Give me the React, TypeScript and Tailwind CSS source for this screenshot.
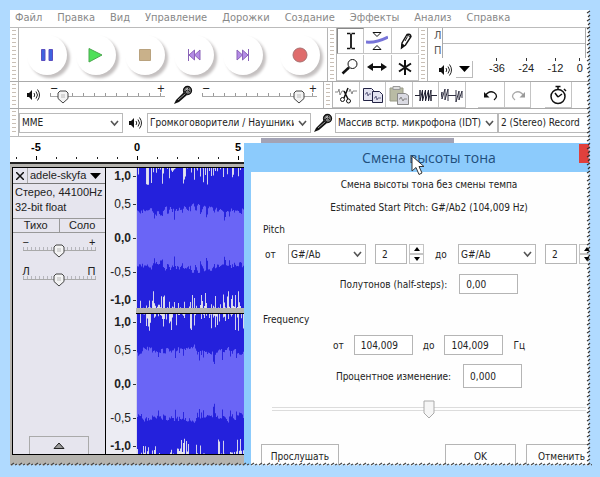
import { ReactNode, useState } from "react";
import clsx from "clsx";

const menu = [
	"Файл",
	"Правка",
	"Вид",
	"Управление",
	"Дорожки",
	"Создание",
	"Эффекты",
	"Анализ",
	"Справка",
];

const scale = [
	{ label: "1,0", className: "h-4 font-bold" },
	{ label: "0,5", className: "h-10" },
	{ label: "0,0", className: "h-7 font-bold" },
	{ label: "-0,5", className: "h-10" },
	{ label: "-1,0", className: "h-4 font-bold" },
];

const COLUMNS = 460;

const createRandom = (seed: number) => () => {
	seed = (seed * 16807) % 2147483647;
	return seed / 2147483647;
};

const buildWave = (seed: number, base: number) => {
	const random = createRandom(seed);
	let peak = "";
	let rms = "";
	let drift = 0;

	for (let x = 1; x < COLUMNS; x++) {
		const top = random() > 0.45 ? random() ** 2 * 17 : 0;
		const bottom = random() > 0.45 ? random() ** 2 * 17 : 0;
		drift = drift * 0.8 + (random() - 0.5) * 5;
		const level = base + drift + random() * 4 - (random() > 0.85 ? 6 : 0);
		const low = level + random() * 3 - 1;
		peak += `M${x + 0.5} ${top.toFixed(1)}V${(140 - bottom).toFixed(1)}`;
		rms += `M${x + 0.5} ${(70 - level).toFixed(1)}V${(70 + low).toFixed(1)}`;
	}
	return { peak, rms };
};

const channels = [buildWave(4177, 26), buildWave(9241, 31)];

const Wave = ({ peak, rms }: { peak: string; rms: string }) => (
	<svg className="block h-[140px] w-full bg-[#e4e3ee]">
		<path d={peak} stroke="#2421dc" strokeWidth="1.1" />
		<path d={rms} stroke="#6a65f6" strokeWidth="1.1" />
	</svg>
);

const Grip = () => (
	<div className="flex w-[9px] shrink-0 justify-center self-stretch border-r border-[#b5b5b5] py-[2px]">
		<div className="w-[4px] bg-[repeating-linear-gradient(to_bottom,#c9bfb5_0_1px,transparent_1px_4px)]" />
	</div>
);

const SpeakerIcon = () => (
	<svg width="14" height="14" viewBox="0 0 14 14" fill="none" className="shrink-0">
		<path d="M1 5h2l3-3v10l-3-3H1z" fill="#111" />
		<path d="M8 5q1.5 2 0 4M10 3.500q3 3.500 0 7M11.500 1.500q4 5.500 0 11" stroke="#222" />
	</svg>
);

const MicIcon = () => (
	<svg width="20" height="20" viewBox="0 0 20 20" className="shrink-0">
		<path d="M1 19 3 15 11 7l3 3-8 7z" fill="#111" />
		<path d="m5 15 7-6" stroke="#999" />
		<circle cx="14.500" cy="5.500" r="4" fill="#777" stroke="#111" strokeWidth="1.300" />
		<path d="m10 5 5 5M13 3l4 4M16 3l-4 4" stroke="#222" />
		<path d="M13 4h2" stroke="#fff" />
	</svg>
);

interface SliderProps {
	label: string;
	initial: number;
	marks: [string, string];
	className: string;
	dense?: boolean;
}

const Slider = ({ label, initial, marks, className, dense }: SliderProps) => {
	const [value, setValue] = useState(initial);

	return (
		<label className={clsx("relative block h-[22px] shrink-0", className)}>
			<span className="flex h-[9px] items-center justify-between text-[11px] leading-[9px] text-[#222]">
				<span>{marks[0]}</span>
				<span>{marks[1]}</span>
			</span>
			<span
				className={clsx(
					"block h-1 border-b border-[#a9a9a9]",
					dense
						? "bg-[repeating-linear-gradient(to_right,#b5b5bb_0_1px,transparent_1px_4px)]"
						: "bg-[repeating-linear-gradient(to_right,#9a9a9a_0_1px,transparent_1px_11px)]"
				)}
			/>
			<svg
				width="12"
				height="14"
				viewBox="0 0 12 14"
				className="absolute top-[6px] -translate-x-1/2"
				style={{ left: `${value}%` }}
			>
				<path d="M3 1h6l2 2v5.500L6 13 1 8.500V3z" fill="#f3f3f3" stroke="#444" />
				<path d="M4 5h4M4 7h4" stroke="#bbb" />
			</svg>
			<input
				type="range"
				aria-label={label}
				value={value}
				onChange={(e) => setValue(Number(e.target.value))}
				className="absolute inset-0 w-full opacity-0"
			/>
		</label>
	);
};

interface SelectProps {
	label: string;
	value: string;
	className: string;
}

const Select = ({ label, value, className }: SelectProps) => (
	<div className={clsx("relative h-5 shrink-0", className)}>
		<select
			aria-label={label}
			className="block h-full w-full appearance-none border border-[#b9b9b9] bg-white pr-4 pl-[2px] text-[10px] text-[#222]"
		>
			<option>{value}</option>
		</select>
		<svg
			width="9"
			height="7"
			viewBox="0 0 9 7"
			fill="none"
			className="pointer-events-none absolute top-[7px] right-1"
		>
			<path d="m1 1 3.500 4L8 1" stroke="#555" strokeWidth="1.600" />
		</svg>
	</div>
);

const RoundButton = ({ label, children }: { label: string; children: ReactNode }) => (
	<button
		type="button"
		aria-label={label}
		className="flex size-10 shrink-0 items-center justify-center rounded-full bg-white shadow-[3px_3px_3px_#c4c0c0]"
	>
		<svg width="16" height="16" viewBox="0 0 16 16">
			{children}
		</svg>
	</button>
);

interface ToolProps {
	label: string;
	children: ReactNode;
	className?: string;
}

const Tool = ({ label, children, className }: ToolProps) => (
	<button
		type="button"
		aria-label={label}
		className={clsx(
			"flex h-[26px] shrink-0 items-center justify-center border-r border-b border-[#c4c4c4]",
			className
		)}
	>
		<svg width="22" height="22" viewBox="0 0 22 22" fill="none" stroke="#111">
			{children}
		</svg>
	</button>
);

const Transport = () => (
	<div className="flex w-[318px] shrink-0 border-r border-[#b5b5b5]">
		<Grip />
		<div className="flex items-center gap-[9px] pl-2">
			<RoundButton label="Пауза">
				<path d="M2.500 2.500h3.500v11H2.500zM10 2.500h3.500v11H10z" fill="#3d63e0" stroke="#5a4fc0" />
			</RoundButton>
			<RoundButton label="Воспроизвести">
				<path d="m1 1.500 13 6.500-13 7z" fill="#4fe05a" stroke="#4aa84e" />
			</RoundButton>
			<RoundButton label="Остановить">
				<path d="M2.500 2.500h11v11h-11z" fill="#c9b18a" stroke="#b9a27e" />
			</RoundButton>
			<RoundButton label="К началу">
				<path d="M2.500 2v12M8.500 3v10L3 8zM14 3v10L8.500 8z" fill="#b48be6" stroke="#8a63b8" />
			</RoundButton>
			<RoundButton label="К концу">
				<path d="M13.500 2v12M7.500 3v10L13 8zM2 3v10l5.500-5z" fill="#b48be6" stroke="#8a63b8" />
			</RoundButton>
			<div className="pl-2">
				<RoundButton label="Записать">
					<circle cx="8" cy="8" r="7" fill="#df6c6c" stroke="#a87070" />
				</RoundButton>
			</div>
		</div>
	</div>
);

const Tools = () => (
	<div className="grid w-[82px] shrink-0 grid-cols-3">
		<Tool label="Выделение" className="border-t border-l border-t-[#888] border-l-[#888]">
			<path d="M7 3.500h3.500M11.500 3.500H15M7 18.500h3.500M11.500 18.500H15" strokeWidth="1.500" />
			<path d="M11 4v14" strokeWidth="1.800" />
		</Tool>
		<Tool label="Огибающая">
			<path d="M0 12q10 1 22-5" stroke="#7774d8" strokeWidth="3" />
			<path d="M7 2.500h8l-4 4zM7 19.500h8l-4-4z" fill="#fff" />
		</Tool>
		<Tool label="Рисование">
			<path d="m7.500 18 .5-5 5-8.500q3.500-1 4 2L11.500 15z" fill="#fff" strokeWidth="1.400" />
			<path d="m7.500 18 .5-4 2.500 1.500zM11 11l2.500-4.500" fill="#111" />
			<path d="m13 5 4 2" />
		</Tool>
		<Tool label="Масштаб">
			<circle cx="13.500" cy="8" r="4.500" />
			<path d="m10 11.500-6.500 6" strokeWidth="2.500" />
		</Tool>
		<Tool label="Перемещение">
			<path d="M4 11h14" strokeWidth="2" />
			<path d="m1 11 6-4v8zM21 11l-6-4v8z" fill="#111" stroke="none" />
		</Tool>
		<Tool label="Универсальный">
			<path d="M11 4v15M5 7.500l12 8M17 7.500l-12 8" strokeWidth="2" />
		</Tool>
	</div>
);

const Meter = () => (
	<div className="flex flex-1 flex-col pl-[6px] text-[11px] text-[#222]">
		<div className="mr-[6px] flex h-[30px]">
			<div className="flex w-[8px] flex-col justify-around leading-[14px] text-[#555]">
				<span>Л</span>
				<span>П</span>
			</div>
			<div className="flex-1 border-x border-[#aaa]">
				<div className="h-4 border-b border-[#bbb]" />
			</div>
		</div>
		<div className="flex flex-1 items-center pl-1">
			<SpeakerIcon />
			<button
				type="button"
				aria-label="Уровень"
				className="ml-1 flex size-[17px] items-center justify-center border-r border-b border-[#bbb]"
			>
				<svg width="11" height="6" viewBox="0 0 11 6">
					<path d="M0 0h11L5.500 6z" />
				</svg>
			</button>
			<div className="flex flex-1 justify-between self-start pr-[9px] pl-4 font-['Liberation_Sans',sans-serif]">
				{["-36", "-24", "-12", "0"].map((db) => (
					<span
						key={db}
						className="flex flex-col items-center leading-[14px] before:h-[3px] before:w-px before:bg-[#333]"
					>
						{db}
					</span>
				))}
			</div>
		</div>
	</div>
);

const EditTools = () => (
	<div className="flex flex-1">
		<Tool label="Вырезать" className="w-[27px]">
			<path d="M0 8h3l1-3 1 6 2-4h2M14 8l1-3 2 5 1-3h4" stroke="#888" />
			<path d="m13 4-4 10M9 7l4 8" strokeWidth="1.500" />
			<circle cx="7.500" cy="15.500" r="2" />
			<circle cx="13.500" cy="17" r="2" />
		</Tool>
		<Tool label="Копировать" className="w-[26px]">
			<path d="M1.500 4.500h8l2 2v10h-10z" fill="#e3e3f0" stroke="#224" />
			<path d="M10.500 7.500h7l3 3v8h-10z" fill="#e3e3f0" stroke="#224" />
			<path d="M3 10h1l1-2 1 4 1-2h2M12 14h1l1-2 1 4 1-2h3" stroke="#668" />
		</Tool>
		<Tool label="Вставить" className="w-[27px]">
			<path d="M2 4h13v13H2z" fill="#b9bba4" stroke="#999b88" />
			<path d="M5 2.500h7v3H5z" fill="#ddd" stroke="#999" />
			<path d="M9.500 9.500h8l3 2v9h-11z" fill="#dadae2" stroke="#888" />
			<path d="M11 15h1l1-2 2 4 1-2h3" stroke="#888" />
		</Tool>
		<Tool label="Обрезать" className="w-[26px]">
			<path d="M0 11.500h5V6v11l2.500-11v11l3-11v11l3-11v11l2.500-11v11V11.500h6" stroke="#223" />
		</Tool>
		<Tool label="Тишина" className="w-[27px]">
			<path
				d="M0 13l1-5v7l3-10v11l3-11v12M7 11.500h8M15 6v12l3-11v9l3-9v7"
				stroke="#334"
			/>
		</Tool>
		<Tool label="Отменить действие" className="ml-3 w-[27px]">
			<path d="M5 12q4-6 9-3.500 5 3.500 0 7.500" strokeWidth="1.300" />
			<path d="M4 8v5.500h5.500z" fill="#111" stroke="none" />
		</Tool>
		<Tool label="Повторить действие" className="w-[26px]">
			<path d="M17 12q-4-6-9-3.500-5 3.500 0 7.500" stroke="#aaa" strokeWidth="1.300" />
			<path d="M18 8v5.500h-5.500z" fill="#999" stroke="none" />
		</Tool>
		<Tool label="Таймер" className="ml-[14px] w-[27px]">
			<circle cx="11" cy="12.500" r="7" strokeWidth="1.500" />
			<path d="M8.500 2.500h5M11 3v3M17 5l2 2M11 13 8 9M11 13l4-3" strokeWidth="1.500" />
		</Tool>
	</div>
);

const Ruler = () => (
	<div className="relative flex h-[27px] border-b-2 border-[#222] bg-white font-['Liberation_Sans',sans-serif] text-[11px] font-bold">
		{/* play region above the ticks */}
		<div className="absolute top-px right-[138px] left-[251px] h-[6px] bg-[#a3a3b5]" />
		<div className="grid grid-cols-[76px_101px_101px] items-end pb-[2px]">
			{["-5", "0", "5"].map((second) => (
				<span
					key={second}
					className="mr-[38px] flex w-6 flex-col items-center justify-self-end leading-3 after:mt-[3px] after:h-1 after:w-px after:bg-black"
				>
					{second}
				</span>
			))}
		</div>
		<svg className="absolute bottom-[2px] left-0 h-[3px] w-full">
			<path
				d="M6.500 0v2M46.500 0v2M66.500 0v2M87.500 0v2M107.500 0v2M147.500 0v2M167.500 0v2M188.500 0v2M208.500 0v2"
				stroke="#222"
			/>
		</svg>
	</div>
);

const TrackPanel = () => (
	<div className="flex w-[92px] shrink-0 flex-col bg-[#e6e5ee] text-[11px] text-[#222]">
		<div className="flex h-4 items-center border-b border-[#777]">
			<button
				type="button"
				aria-label="Закрыть трек"
				className="flex h-full w-[15px] items-center justify-center border-r border-[#aaa]"
			>
				<svg width="8" height="8" viewBox="0 0 8 8">
					<path d="m0 0 8 8M8 0 0 8" stroke="#111" strokeWidth="1.500" />
				</svg>
			</button>
			<button type="button" className="flex flex-1 items-center justify-between pr-1 pl-[2px]">
				adele-skyfa
				<svg width="11" height="6" viewBox="0 0 11 6">
					<path d="M0 0h11L5.500 6z" />
				</svg>
			</button>
		</div>
		<div className="h-[34px] pt-[1px] pl-[2px] leading-[15px] whitespace-nowrap">
			<p>Стерео, 44100Hz</p>
			<p>32-bit float</p>
		</div>
		<div className="flex h-[15px] border-y border-[#999] leading-[13px]">
			<button type="button" className="flex-1 border-r border-[#999]">
				Тихо
			</button>
			<button type="button" className="flex-1">
				Соло
			</button>
		</div>
		<div className="flex flex-col items-center gap-[7px] pt-[5px]">
			<Slider label="Усиление" initial={50} marks={["−", "+"]} className="w-[73px]" dense />
			<Slider label="Панорама" initial={50} marks={["Л", "П"]} className="w-[73px]" dense />
		</div>
		<button
			type="button"
			aria-label="Свернуть"
			className="mx-4 mt-auto flex h-[18px] items-center justify-center border border-b-0 border-[#aaa]"
		>
			<svg width="12" height="7" viewBox="0 0 12 7">
				<path d="M1 6.500h10L6 1z" fill="#999" stroke="#222" />
			</svg>
		</button>
	</div>
);

const Track = () => (
	<div className="ml-[2px] flex border-y border-l border-black font-['Liberation_Sans',sans-serif]">
		<TrackPanel />
		<div className="flex w-[31px] shrink-0 flex-col justify-between border-l border-black bg-[#ececf3] text-[12px] text-[#222]">
			{channels.map((_, index) => (
				<div key={index}>
					{scale.map(({ label, className }) => (
						<div
							key={label}
							className={clsx(
								"flex items-center justify-end gap-[2px] after:h-px after:w-[3px] after:bg-[#333]",
								className
							)}
						>
							{label}
						</div>
					))}
				</div>
			))}
		</div>
		<div className="flex min-w-0 flex-1 flex-col">
			<Wave {...channels[0]} />
			<div className="h-[6px] border-b border-black bg-[#b5b3ae]" />
			<Wave {...channels[1]} />
		</div>
	</div>
);

interface FieldProps {
	label: string;
	value: string;
	className: string;
}

const Field = ({ label, value, className }: FieldProps) => (
	<input
		aria-label={label}
		defaultValue={value}
		className={clsx("shrink-0 border border-[#b5b5b5] bg-white px-[6px] text-[10px]", className)}
	/>
);

const Stepper = () => (
	<div className="ml-[2px] flex h-5 w-[15px] shrink-0 flex-col">
		{["M0 4h6L3 0z", "M0 0h6L3 4z"].map((d, index) => (
			<button
				key={d}
				type="button"
				aria-label={index === 0 ? "Больше" : "Меньше"}
				className="flex flex-1 items-center justify-center border border-[#c4c4c4]"
			>
				<svg width="6" height="4" viewBox="0 0 6 4">
					<path d={d} />
				</svg>
			</button>
		))}
	</div>
);

const PercentSlider = () => {
	const [value, setValue] = useState(50);

	return (
		<div className="relative mx-[21px] mt-3 h-5">
			<div className="absolute inset-x-0 top-[7px] h-1 border-y border-[#dcdcdc]" />
			<svg
				width="12"
				height="19"
				viewBox="0 0 12 19"
				className="absolute top-0 -translate-x-1/2"
				style={{ left: `${value}%` }}
			>
				<path d="M1 1h10v12l-5 5-5-5z" fill="#f6f6f6" stroke="#aaa" />
			</svg>
			<input
				type="range"
				aria-label="Процентное изменение"
				value={value}
				onChange={(e) => setValue(Number(e.target.value))}
				className="absolute inset-0 w-full opacity-0"
			/>
		</div>
	);
};

const PitchDialog = () => (
	<div
		role="dialog"
		aria-labelledby="dialog-title"
		className="absolute top-[133px] -bottom-2 left-[234px] flex w-[370px] flex-col bg-[#8ccbfc] px-[7px] text-[10px] text-[#222]"
	>
		<div className="relative h-[29px]">
			<h2
				id="dialog-title"
				className="text-center font-['Open_Sans',sans-serif] text-[14px] leading-[29px] text-[#1f4f7c]"
			>
				Смена высоты тона
			</h2>
			<button
				type="button"
				aria-label="Закрыть"
				className="absolute top-px right-0 h-[19px] w-[28px] bg-[#e0403c]"
			/>
			<svg width="14" height="21" viewBox="0 0 14 21" className="absolute top-3 left-40">
				<path d="M1 1v15l4-3.500 3 7 3-1.500-3-6.500h5z" fill="#fff" stroke="#333" />
			</svg>
		</div>
		<div className="flex-1 bg-[#fefefe]">
			<p className="pt-[5px] text-center leading-4">Смена высоты тона без смены темпа</p>
			<p className="pt-[7px] text-center leading-4">
				Estimated Start Pitch: G#/Ab2 (104,009 Hz)
			</p>
			<h3 className="mt-[6px] pl-3 leading-4">Pitch</h3>
			<div className="mt-[6px] flex h-5 items-center pl-[14px]">
				<span className="w-[23px]">от</span>
				<Select label="Начальная нота" value="G#/Ab" className="w-[78px]" />
				<Field label="Начальная октава" value="2" className="ml-[9px] h-5 w-8" />
				<Stepper />
				<span className="w-[34px] pl-[11px]">до</span>
				<Select label="Конечная нота" value="G#/Ab" className="w-[78px]" />
				<Field label="Конечная октава" value="2" className="ml-[9px] h-5 w-8" />
				<Stepper />
			</div>
			<div className="mt-[10px] flex h-5 items-center justify-center gap-3">
				<span>Полутонов (half-steps):</span>
				<Field label="Полутонов" value="0,00" className="h-5 w-[59px]" />
			</div>
			<h3 className="mt-[18px] pl-3 leading-4">Frequency</h3>
			<div className="mt-[7px] flex h-5 items-center justify-center gap-[10px]">
				<span>от</span>
				<Field label="Частота от" value="104,009" className="h-5 w-[59px]" />
				<span>до</span>
				<Field label="Частота до" value="104,009" className="h-5 w-[59px]" />
				<span>Гц</span>
			</div>
			<div className="mt-[9px] flex h-6 items-center justify-center gap-3">
				<span>Процентное изменение:</span>
				<Field label="Проценты" value="0,000" className="h-6 w-[59px]" />
			</div>
			<PercentSlider />
			<div className="mt-6 flex h-6 gap-[10px] px-[10px]">
				<button type="button" className="mr-auto w-[78px] border border-[#b5b5b5]">
					Прослушать
				</button>
				<button type="button" className="w-[71px] border border-[#b5b5b5]">
					OK
				</button>
				<button type="button" className="w-[71px] border border-[#b5b5b5]">
					Отменить
				</button>
			</div>
		</div>
	</div>
);

const TornEdges = () => (
	<svg className="pointer-events-none absolute inset-0 h-full w-full" aria-hidden="true">
		<defs>
			<pattern id="torn-side" width="6" height="8" patternUnits="userSpaceOnUse">
				<path d="M6 0v8H3L4 5 2 4l2-2-1-2z" fill="#b0daff" />
				<path d="m1 3 3-2M2 7l2-2" stroke="#333" strokeWidth="1.200" />
			</pattern>
			<pattern id="torn-bottom" width="8" height="6" patternUnits="userSpaceOnUse">
				<path d="M0 6h8V3L6 4 4 3 2 5 0 4z" fill="#b0daff" />
				<path d="m1 4 3-2M5 4l2-1" stroke="#444" strokeWidth="1.200" />
			</pattern>
		</defs>
		<svg x="100%" overflow="visible">
			<rect x="-6" width="6" height="100%" fill="url(#torn-side)" />
		</svg>
		<svg y="100%" overflow="visible">
			<rect y="-6" width="100%" height="6" fill="url(#torn-bottom)" />
		</svg>
	</svg>
);

const App = () => {
	return (
		<div className="flex min-h-screen flex-col bg-[#b0daff] py-[10px] pr-2 pl-[10px] font-['DejaVu_Sans_Condensed','DejaVu_Sans',sans-serif]">
			<main className="relative flex flex-1 flex-col overflow-hidden bg-[#b5b3ae]">
				<div className="bg-white">
					<nav className="flex h-[18px] items-center gap-[15px] border-b border-[#bbb] pl-[5px] text-[11px] text-[#888]">
						{menu.map((item) => (
							<button key={item} type="button">
								{item}
							</button>
						))}
					</nav>
					<div className="flex h-[54px] border-b border-[#aaa]">
						<Transport />
						<Grip />
						<Tools />
						<Grip />
						<Meter />
					</div>
					<div className="flex h-[27px] border-b border-[#aaa]">
						<div className="flex w-[314px] shrink-0 items-center border-r border-[#b5b5b5]">
							<Grip />
							<div className="flex items-center pl-[7px]">
								<SpeakerIcon />
								<Slider
									label="Громкость воспроизведения"
									initial={11}
									marks={["−", "+"]}
									className="ml-[10px] w-[115px]"
								/>
								<div className="pr-[9px] pl-2">
									<MicIcon />
								</div>
								<Slider
									label="Громкость записи"
									initial={84}
									marks={["−", "+"]}
									className="w-[115px]"
								/>
							</div>
						</div>
						<Grip />
						<EditTools />
					</div>
					<div className="flex h-7 items-center border-b border-[#bbb]">
						<Grip />
						<Select label="Интерфейс" value="MME" className="w-[104px]" />
						<div className="px-[5px]">
							<SpeakerIcon />
						</div>
						<Select
							label="Устройство вывода"
							value="Громкоговорители / Наушники"
							className="w-[164px]"
						/>
						<div className="px-[2px]">
							<MicIcon />
						</div>
						<Select
							label="Устройство записи"
							value="Массив встр. микрофона (IDT)"
							className="w-[163px]"
						/>
						<Select
							label="Каналы записи"
							value="2 (Stereo) Record"
							className="w-[160px]"
						/>
					</div>
				</div>
				<Ruler />
				<div className="h-[3px]" />
				<Track />
				<PitchDialog />
				<TornEdges />
			</main>
		</div>
	);
};

export default App;
